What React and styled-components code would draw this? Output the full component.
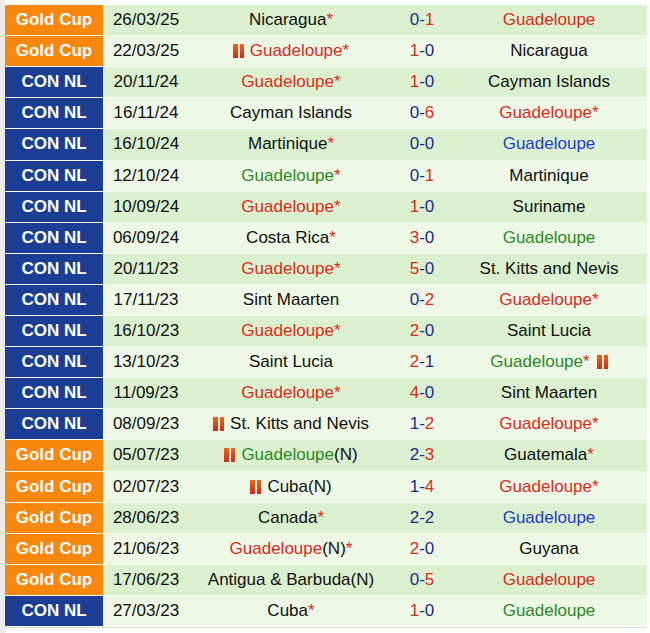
import styled, { createGlobalStyle } from "styled-components";

const GlobalStyle = createGlobalStyle`
    * { box-sizing: border-box; }
    body {
        margin: 0;
        background: #ffffff;
        font-family: "Liberation Sans", Arial, sans-serif;
    }
`

const RED = "#dd2a1c";
const GREEN = "#2a8a24";
const BLUE = "#1e3ccc";
const NAVY = "#1c2a8e";

// result colour for Guadeloupe: w = win, d = draw, l = loss
const resultColor = { w: RED, d: BLUE, l: GREEN };

const matches = [
    { cup: "gold", date: "26/03/25", home: { name: "Nicaragua", star: true }, score: [0, 1], away: { name: "Guadeloupe", res: "w" } },
    { cup: "gold", date: "22/03/25", home: { name: "Guadeloupe", star: true, res: "w", cardBefore: true }, score: [1, 0], away: { name: "Nicaragua" } },
    { cup: "con", date: "20/11/24", home: { name: "Guadeloupe", star: true, res: "w" }, score: [1, 0], away: { name: "Cayman Islands" } },
    { cup: "con", date: "16/11/24", home: { name: "Cayman Islands" }, score: [0, 6], away: { name: "Guadeloupe", star: true, res: "w" } },
    { cup: "con", date: "16/10/24", home: { name: "Martinique", star: true }, score: [0, 0], away: { name: "Guadeloupe", res: "d" } },
    { cup: "con", date: "12/10/24", home: { name: "Guadeloupe", star: true, res: "l" }, score: [0, 1], away: { name: "Martinique" } },
    { cup: "con", date: "10/09/24", home: { name: "Guadeloupe", star: true, res: "w" }, score: [1, 0], away: { name: "Suriname" } },
    { cup: "con", date: "06/09/24", home: { name: "Costa Rica", star: true }, score: [3, 0], away: { name: "Guadeloupe", res: "l" } },
    { cup: "con", date: "20/11/23", home: { name: "Guadeloupe", star: true, res: "w" }, score: [5, 0], away: { name: "St. Kitts and Nevis" } },
    { cup: "con", date: "17/11/23", home: { name: "Sint Maarten" }, score: [0, 2], away: { name: "Guadeloupe", star: true, res: "w" } },
    { cup: "con", date: "16/10/23", home: { name: "Guadeloupe", star: true, res: "w" }, score: [2, 0], away: { name: "Saint Lucia" } },
    { cup: "con", date: "13/10/23", home: { name: "Saint Lucia" }, score: [2, 1], away: { name: "Guadeloupe", star: true, res: "l", cardAfter: true } },
    { cup: "con", date: "11/09/23", home: { name: "Guadeloupe", star: true, res: "w" }, score: [4, 0], away: { name: "Sint Maarten" } },
    { cup: "con", date: "08/09/23", home: { name: "St. Kitts and Nevis", cardBefore: true }, score: [1, 2], away: { name: "Guadeloupe", star: true, res: "w" } },
    { cup: "gold", date: "05/07/23", home: { name: "Guadeloupe", neutral: true, res: "l", cardBefore: true }, score: [2, 3], away: { name: "Guatemala", star: true } },
    { cup: "gold", date: "02/07/23", home: { name: "Cuba", neutral: true, cardBefore: true }, score: [1, 4], away: { name: "Guadeloupe", star: true, res: "w" } },
    { cup: "gold", date: "28/06/23", home: { name: "Canada", star: true }, score: [2, 2], away: { name: "Guadeloupe", res: "d" } },
    { cup: "gold", date: "21/06/23", home: { name: "Guadeloupe", neutral: true, star: true, res: "w" }, score: [2, 0], away: { name: "Guyana" } },
    { cup: "gold", date: "17/06/23", home: { name: "Antigua & Barbuda", neutral: true }, score: [0, 5], away: { name: "Guadeloupe", res: "w" } },
    { cup: "con", date: "27/03/23", home: { name: "Cuba", star: true }, score: [1, 0], away: { name: "Guadeloupe", res: "l" } },
];

function Team({ team }){
    return(
        <TeamCell>
            {team.cardBefore && <RedCard />}
            <TeamName color={team.res ? resultColor[team.res] : "#111111"}>{team.name}</TeamName>
            {team.neutral && <Neutral>(N)</Neutral>}
            {team.star && <Star>*</Star>}
            {team.cardAfter && <RedCard $after />}
        </TeamCell>
    );
}

function Score({ score }){
    const [a, b] = score;
    const colorA = a > b ? RED : NAVY;
    const colorB = b > a ? RED : NAVY;
    return(
        <ScoreCell>
            <Digit color={colorA}>{a}</Digit>
            <Digit color={NAVY}>-</Digit>
            <Digit color={colorB}>{b}</Digit>
        </ScoreCell>
    );
}

export default function App(){
    return(
        <>
            <GlobalStyle />
            <Page>
                <Table>
                    {matches.map((m, index) =>
                        <Row key={index} $odd={index % 2 === 0}>
                            <Label $cup={m.cup}>{m.cup === "gold" ? "Gold Cup" : "CON NL"}</Label>
                            <DateCell>{m.date}</DateCell>
                            <Team team={m.home} />
                            <Score score={m.score} />
                            <Team team={m.away} />
                        </Row>
                    )}
                </Table>
            </Page>
        </>
    );
}

const Page = styled.div`
    width: 650px;
    height: 633px;
    padding: 5px 3px 5px 0;
    border-left: 5px solid #ececec;
    background: #ffffff;
`

const Table = styled.div`
    height: 623px;
    display: grid;
    grid-template-rows: repeat(20, 1fr);
    border-bottom: 1px solid #dcdcdc;
`

const Row = styled.div`
    display: grid;
    grid-template-columns: 98px 86px 204px 58px 1fr;
    align-items: stretch;
    background-color: ${props => props.$odd ? "#dbf0ce" : "#eef8e7"};
    border-bottom: 1px solid rgba(255, 255, 255, 0.6);
    font-size: 17px;
    color: #111111;
`

const Label = styled.div`
    display: flex;
    align-items: center;
    justify-content: center;
    background-color: ${props => props.$cup === "gold" ? "#f8870e" : "#1b3e94"};
    color: #ffffff;
    font-weight: 700;
    font-size: 17px;
`

const DateCell = styled.div`
    display: flex;
    align-items: center;
    justify-content: center;
`

const TeamCell = styled.div`
    display: flex;
    align-items: center;
    justify-content: center;
    white-space: nowrap;
`

const TeamName = styled.span`
    color: ${props => props.color};
`

const Neutral = styled.span`
    color: #111111;
`

const Star = styled.span`
    color: ${RED};
`

const RedCard = styled.span`
    display: inline-block;
    width: 11px;
    height: 14px;
    margin: ${props => props.$after ? "0 0 0 7px" : "0 6px 0 0"};
    background:
        linear-gradient(to right, transparent 5px, #fff3e6 5px, #fff3e6 7px, transparent 7px),
        linear-gradient(to bottom, #f0641c, #d22a10);
`

const ScoreCell = styled.div`
    display: flex;
    align-items: center;
    justify-content: center;
`

const Digit = styled.span`
    color: ${props => props.color};
`
